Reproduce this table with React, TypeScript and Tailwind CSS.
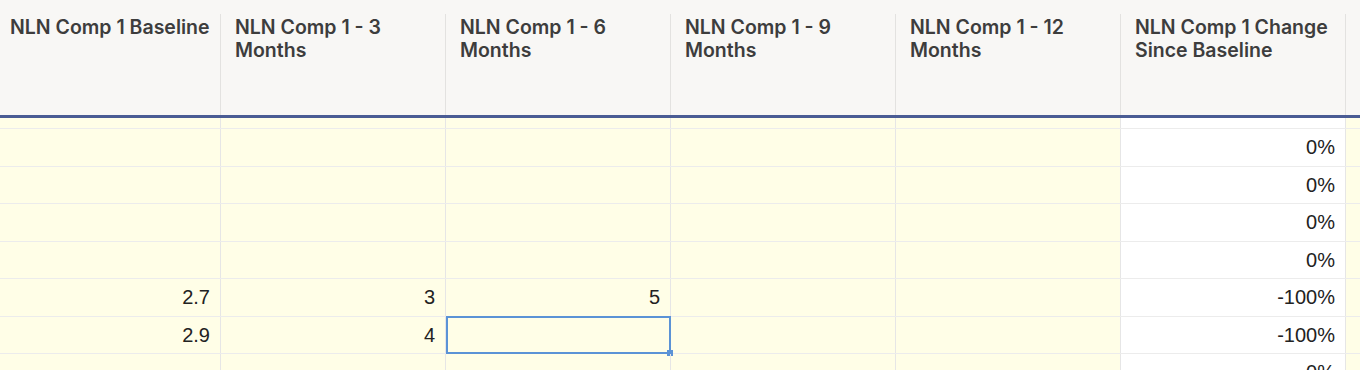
import React from "react";

const headers = [
  "NLN Comp 1 Baseline",
  "NLN Comp 1 - 3 Months",
  "NLN Comp 1 - 6 Months",
  "NLN Comp 1 - 9 Months",
  "NLN Comp 1 - 12 Months",
  "NLN Comp 1 Change Since Baseline",
];

const rows: string[][] = [
  ["", "", "", "", "", ""],
  ["", "", "", "", "", "0%"],
  ["", "", "", "", "", "0%"],
  ["", "", "", "", "", "0%"],
  ["", "", "", "", "", "0%"],
  ["2.7", "3", "5", "", "", "-100%"],
  ["2.9", "4", "", "", "", "-100%"],
  ["", "", "", "", "", "0%"],
];

function colWidth(i: number) {
  return i === 0 ? "w-[221px]" : "w-[225px]";
}

export default function App() {
  return (
    <div className="w-[1360px] h-[370px] overflow-hidden bg-[#fffee7]">
      <div className="flex pt-[14px] bg-[#f8f7f5] border-b-[3px] border-[#4a5c94] h-[118px]">
        {headers.map((h, i) => (
          <div
            key={i}
            className={`${colWidth(i)} shrink-0 h-full border-r border-[#e3e2e0] ${i === 0 ? "pl-[10px]" : "pl-[14px]"} pr-[6px] pt-[2px] text-[19.5px] leading-[23px] font-semibold text-[#3d3d3d]`}
            style={{ fontFamily: "Inter, 'Noto Sans', sans-serif" }}
          >
            {h}
          </div>
        ))}
        <div className="flex-1" />
      </div>
      <div style={{ fontFamily: "'Liberation Sans', Arial, sans-serif" }}>
        {rows.map((r, ri) => (
          <div
            key={ri}
            className={`flex border-b border-[#ececec] ${ri === 0 ? "h-[11px]" : "h-[37.5px]"}`}
          >
            {r.map((c, ci) => {
              const selected = ri === 6 && ci === 2;
              return (
                <div
                  key={ci}
                  className={`${colWidth(ci)} shrink-0 h-full border-r border-[#e6e6e6] flex items-center justify-end pr-[10px] text-[20px] text-[#222222] relative ${ci === 5 ? "bg-white" : ""}`}
                >
                  {c}
                  {selected && (
                    <div className="absolute left-0 top-[-1px] right-[-1px] bottom-[-1px] border-2 border-[#5b93d6]">
                      <div className="absolute right-[-4px] bottom-[-4px] w-[6px] h-[6px] bg-[#5b93d6]" />
                    </div>
                  )}
                </div>
              );
            })}
            <div className="flex-1" />
          </div>
        ))}
      </div>
    </div>
  );
}
